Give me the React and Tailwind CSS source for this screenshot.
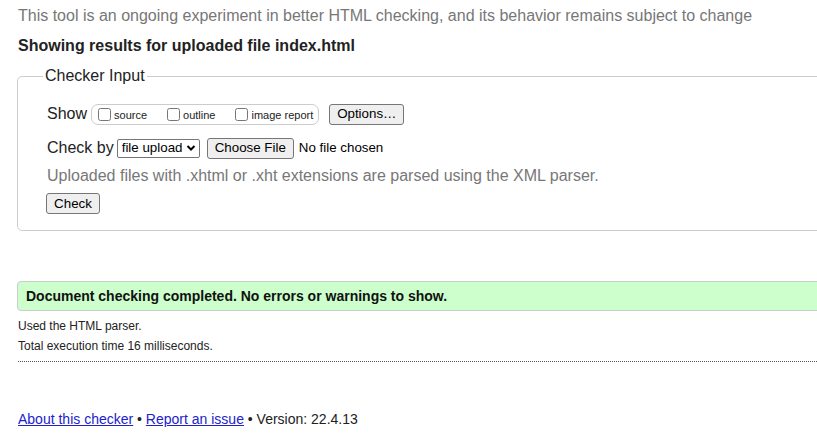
export default function App() {
  const btn =
    "inline-flex items-center justify-center whitespace-nowrap h-[21px] px-[7px] border border-[#767676] rounded-[3px] bg-[#efefef] text-[13.33px] leading-none text-black";
  return (
    <div
      className="w-[817px] h-[444px] overflow-hidden bg-white text-[#222] pl-[17px]"
      style={{ fontFamily: '"Liberation Sans", Arial, sans-serif' }}
    >
      <div className="w-[840px]">
        <p className="pt-[6px] pl-[1px] text-[16px] leading-[20px] text-[#777]">
          This tool is an ongoing experiment in better HTML checking, and its behavior remains subject to change
        </p>
        <h2 className="mt-[10px] pl-[1px] text-[16px] leading-[20px] font-bold text-[#222]">
          Showing results for uploaded file index.html
        </h2>

        <fieldset className="mt-[10px] border border-[#ccc] rounded-[5px] pb-[16px]">
          <legend className="ml-[25px] px-[2px] text-[16px] leading-[20px] text-[#222]">Checker Input</legend>
          <div className="pl-[29px]">
            <div className="mt-[17px] flex items-center h-[22px]">
              <span className="text-[16px] leading-[20px] mr-[4px]">Show</span>
              <div className="flex items-center h-[21px] border border-[#ccc] rounded-[7px] pl-[6px] pr-[5px]">
                <label className="flex items-center">
                  <input type="checkbox" className="w-[13px] h-[13px] m-0 mr-[3px]" />
                  <span className="text-[11px] leading-[13px] mt-[3px]">source</span>
                </label>
                <label className="flex items-center ml-[20px]">
                  <input type="checkbox" className="w-[13px] h-[13px] m-0 mr-[3px]" />
                  <span className="text-[11px] leading-[13px] mt-[3px]">outline</span>
                </label>
                <label className="flex items-center ml-[20px]">
                  <input type="checkbox" className="w-[13px] h-[13px] m-0 mr-[3px]" />
                  <span className="text-[11px] leading-[13px] mt-[3px]">image report</span>
                </label>
              </div>
              <button className={btn + " ml-[10px] w-[75px]"}>Options…</button>
            </div>

            <div className="mt-[12px] flex items-center h-[22px]">
              <span className="text-[16px] leading-[20px] mr-[3px]">Check by</span>
              <div className="flex items-center h-[19px] w-[83px] border border-[#767676] rounded-[2px] bg-white pl-[4px] pr-[3px] text-[13.33px] leading-none text-black">
                <span className="flex-1 whitespace-nowrap">file upload</span>
                <svg width="10" height="8" viewBox="0 0 10 8" className="ml-[1px] shrink-0">
                  <path d="M1.5 2 L5 5.5 L8.5 2" fill="none" stroke="#000" strokeWidth="2" />
                </svg>
              </div>
              <button className={btn + " ml-[7px]"}>Choose File</button>
              <span className="ml-[5px] whitespace-nowrap text-[13.33px] leading-none text-black">No file chosen</span>
            </div>

            <p className="mt-[7px] text-[16px] leading-[20px] text-[#777]">
              Uploaded files with .xhtml or .xht extensions are parsed using the XML parser.
            </p>

            <div className="mt-[7px] ml-[-1px] flex">
              <button className={btn + " h-[20px] w-[54px]"}>Check</button>
            </div>
          </div>
        </fieldset>

        <div className="mt-[50px] h-[30px] flex items-center border border-[#ccc] rounded-l-[4px] bg-[#ccffcc] pl-[8px]">
          <p className="text-[14px] leading-[18px] font-bold text-[#111]">
            Document checking completed. No errors or warnings to show.
          </p>
        </div>

        <p className="mt-[7px] pl-[1px] text-[12px] leading-[16px] text-[#222]">Used the HTML parser.</p>
        <p className="mt-[4px] pl-[1px] text-[12px] leading-[16px] text-[#222]">
          Total execution time 16 milliseconds.
        </p>
        <div className="mt-[7px] ml-[1px] border-t border-dotted border-[#555]" />

        <p className="mt-[47px] pl-[1px] text-[14px] leading-[20px] text-[#222]">
          <a href="#" className="text-[#22c] underline">About this checker</a>
          {" • "}
          <a href="#" className="text-[#22c] underline">Report an issue</a>
          {" • Version: 22.4.13"}
        </p>
      </div>
    </div>
  );
}
